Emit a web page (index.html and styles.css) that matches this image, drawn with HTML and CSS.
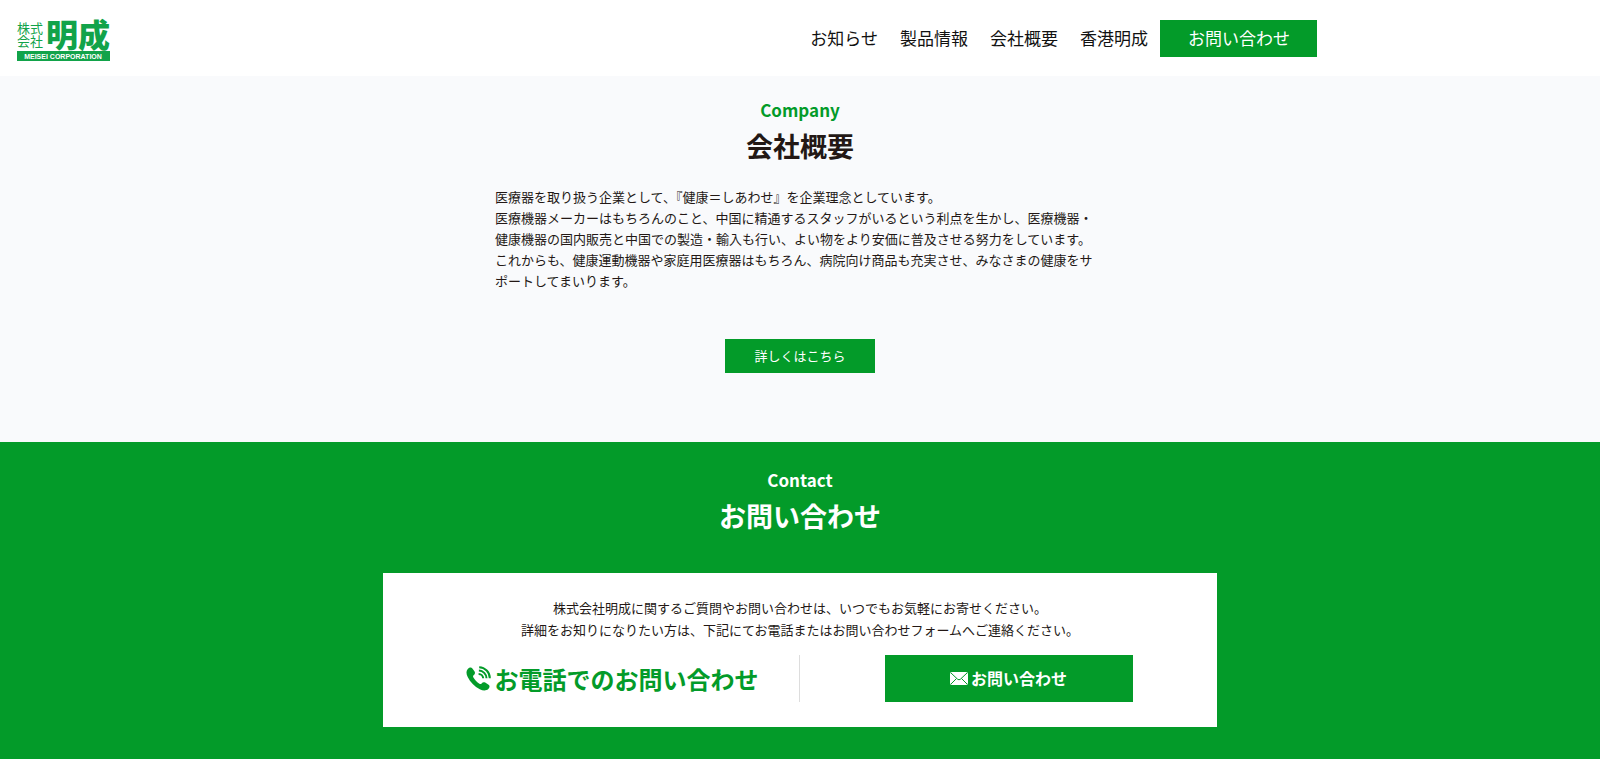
FILE: index.html
```html
<!DOCTYPE html>
<html lang="ja">
<head>
  <meta charset="UTF-8">
  <meta name="viewport" content="width=device-width, initial-scale=1.0">
  <title>株式会社明成</title>
  <link rel="stylesheet" href="styles.css">
</head>
<body>

  <header class="header">
    <a class="logo" href="#" aria-label="株式会社明成">
      <svg width="94" height="42" viewBox="0 0 94 42">
        <text class="logo-small" x="0" y="13">株式</text>
        <text class="logo-small" x="0" y="26">会社</text>
        <text class="logo-large" x="29" y="27">明成</text>
        <rect class="logo-bar" x="0" y="31" width="93" height="10"/>
        <text class="logo-en" x="46" y="39" text-anchor="middle">MEISEI CORPORATION</text>
      </svg>
    </a>
    <nav class="nav">
      <ul class="nav-list">
        <li><a href="#">お知らせ</a></li>
        <li><a href="#">製品情報</a></li>
        <li><a href="#">会社概要</a></li>
        <li><a href="#">香港明成</a></li>
      </ul>
      <a class="nav-button" href="#contact">お問い合わせ</a>
    </nav>
  </header>

  <section class="company">
    <p class="sub-title">Company</p>
    <h2 class="title">会社概要</h2>
    <p class="company-text">医療器を取り扱う企業として、『健康＝しあわせ』を企業理念としています。<br>医療機器メーカーはもちろんのこと、中国に精通するスタッフがいるという利点を生かし、医療機器・健康機器の国内販売と中国での製造・輸入も行い、よい物をより安価に普及させる努力をしています。<br>これからも、健康運動機器や家庭用医療器はもちろん、病院向け商品も充実させ、みなさまの健康をサポートしてまいります。</p>
    <a class="more-button" href="#">詳しくはこちら</a>
  </section>

  <section class="contact" id="contact">
    <p class="sub-title">Contact</p>
    <h2 class="title">お問い合わせ</h2>
    <div class="contact-box">
      <p class="contact-text">株式会社明成に関するご質問やお問い合わせは、いつでもお気軽にお寄せください。<br>詳細をお知りになりたい方は、下記にてお電話またはお問い合わせフォームへご連絡ください。</p>
      <div class="contact-row">
        <div class="contact-tel">
          <a class="tel-link" href="#">
            <svg width="25" height="25" viewBox="0 0 25 25" aria-hidden="true">
              <path fill="currentColor" d="M1.6 3.2 C3 1.4 5.2 1 6.4 2.4 L8.6 5.6 C9.4 7 8.9 8.2 7.6 9.2 C6.9 9.8 6.9 10.5 7.4 11.4 C8.9 14 11 16.2 13.4 17.7 C14.3 18.2 15 18.1 15.6 17.4 C16.6 16.2 17.8 15.8 19.2 16.6 L22.6 18.8 C24 19.8 23.8 21.6 22.3 23 C20 25.1 16.9 24.7 13.8 23.2 C8.6 20.7 4.2 16.2 1.7 11 C0.3 8 -0.1 5.4 1.6 3.2 Z"/>
              <path class="wave" d="M13.2 1.2 A11 11 0 0 1 23.8 12.2"/>
              <path class="wave" d="M12.9 4.6 A7.8 7.8 0 0 1 20.5 12.2"/>
              <path class="wave" d="M12.6 8 A4.6 4.6 0 0 1 17.2 12.3"/>
            </svg>
            お電話でのお問い合わせ
          </a>
        </div>
        <div class="contact-mail">
          <a class="mail-button" href="#">
            <svg width="18" height="13" viewBox="0 0 18 13" aria-hidden="true">
              <rect width="18" height="13" rx="2" fill="currentColor"/>
              <path class="fold" d="M1 1 L7.6 7.2 Q9 8.4 10.4 7.2 L17 1 M1 12 L6.5 6.5 M17 12 L11.5 6.5"/>
            </svg>
            お問い合わせ
          </a>
        </div>
      </div>
    </div>
  </section>

</body>
</html>
```

FILE: styles.css
```css
body {
  margin: 0;
  font-family: "Noto Sans CJK JP", sans-serif;
  font-size: 13px;
  line-height: 21px;
  color: #231815;
  background-color: #039b29;
}
a {
  color: inherit;
  text-decoration: none;
}
p, h2, ul {
  margin: 0;
  padding: 0;
}

/* header */
.header {
  display: flex;
  justify-content: space-between;
  align-items: flex-start;
  height: 56px;
  padding: 20px 283px 0 17px;
  background-color: white;
}
.logo svg {
  display: block;
  overflow: visible;
}
.logo-small {
  font-size: 13px;
  fill: #12a34a;
}
.logo-large {
  font-size: 32px;
  font-weight: 900;
  fill: #12a34a;
}
.logo-bar {
  fill: #12a34a;
}
.logo-en {
  font-family: "Liberation Sans Narrow", "Liberation Sans", Arial, sans-serif;
  font-size: 7px;
  font-weight: bold;
  fill: white;
}
.nav {
  display: flex;
  align-items: flex-start;
  gap: 12px;
  font-size: 17px;
  line-height: 36px;
  color: #111;
}
.nav-list {
  display: flex;
  gap: 22px;
  list-style: none;
}
.nav-button {
  padding: 0 27px 1px 28px;
  background-color: #039b29;
  color: white;
}

/* sections */
.company,
.contact {
  display: flex;
  flex-direction: column;
  align-items: center;
}
.company {
  padding: 21px 20px 69px;
  background-color: #f9fafc;
}
.contact {
  padding: 25px 20px 32px;
  background-color: #039b29;
}
.sub-title {
  margin-bottom: 1px;
  font-size: 17px;
  font-weight: bold;
  line-height: 26px;
  color: #039b29;
}
.title {
  font-size: 27px;
  font-weight: bold;
  line-height: 44px;
}
.contact .sub-title,
.contact .title {
  color: white;
}
.company-text {
  max-width: 610px;
  margin: 18px 0 48px;
}
.more-button {
  padding: 0 29px;
  line-height: 34px;
  background-color: #039b29;
  color: white;
}

/* contact */
.contact-box {
  box-sizing: border-box;
  width: 100%;
  max-width: 834px;
  margin-top: 35px;
  padding: 24px 0 25px;
  background-color: white;
}
.contact-text {
  text-align: center;
  line-height: 22px;
}
.contact-row {
  display: grid;
  grid-template-columns: 1fr 1fr;
  margin-top: 14px;
}
.contact-tel,
.contact-mail {
  display: flex;
  justify-content: center;
  align-items: center;
}
.contact-tel {
  padding-left: 42px;
  border-right: 1px solid #ddd;
}
.tel-link {
  display: flex;
  align-items: center;
  gap: 4px;
  font-size: 24px;
  font-weight: bold;
  line-height: 47px;
  color: #039b29;
}
.wave {
  fill: none;
  stroke: currentColor;
  stroke-width: 2;
}
.mail-button {
  display: flex;
  justify-content: center;
  align-items: center;
  gap: 3px;
  width: 248px;
  font-size: 16px;
  font-weight: bold;
  line-height: 47px;
  background-color: #039b29;
  color: white;
}
.fold {
  fill: none;
  stroke: #039b29;
  stroke-width: 1;
}
```
